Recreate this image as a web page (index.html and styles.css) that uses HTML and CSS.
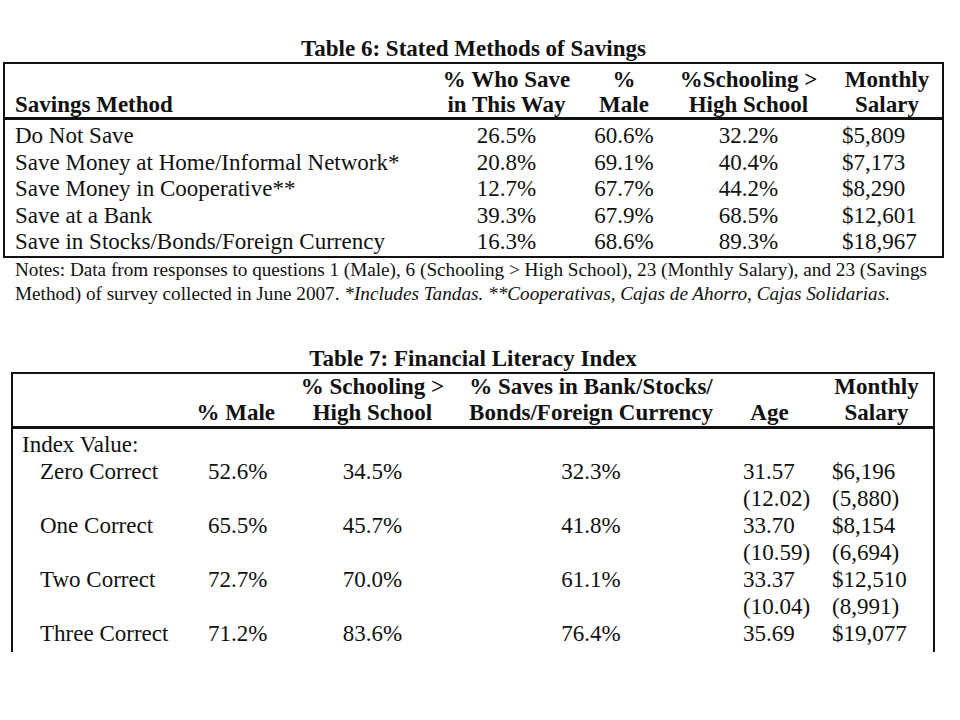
FILE: index.html
```html
<!DOCTYPE html>
<html>
<head>
<meta charset="utf-8">
<link rel="stylesheet" href="styles.css">
</head>
<body>
<main class="page">
  <section class="block6">
    <h2 class="title">Table 6: Stated Methods of Savings</h2>
    <div class="frame6">
      <table class="t6">
        <colgroup>
          <col class="c6a"><col class="c6b"><col class="c6c"><col class="c6d"><col class="c6e">
        </colgroup>
        <thead>
          <tr>
            <th class="lbl">Savings Method</th>
            <th>% Who Save<br>in This Way</th>
            <th>%<br>Male</th>
            <th>%Schooling &gt;<br>High School</th>
            <th>Monthly<br>Salary</th>
          </tr>
        </thead>
        <tbody>
          <tr class="first"><td class="lbl">Do Not Save</td><td>26.5%</td><td>60.6%</td><td>32.2%</td><td class="sal">$5,809</td></tr>
          <tr><td class="lbl">Save Money at Home/Informal Network*</td><td>20.8%</td><td>69.1%</td><td>40.4%</td><td class="sal">$7,173</td></tr>
          <tr><td class="lbl">Save Money in Cooperative**</td><td>12.7%</td><td>67.7%</td><td>44.2%</td><td class="sal">$8,290</td></tr>
          <tr><td class="lbl">Save at a Bank</td><td>39.3%</td><td>67.9%</td><td>68.5%</td><td class="sal">$12,601</td></tr>
          <tr><td class="lbl">Save in Stocks/Bonds/Foreign Currency</td><td>16.3%</td><td>68.6%</td><td>89.3%</td><td class="sal">$18,967</td></tr>
        </tbody>
      </table>
    </div>
    <p class="notes">Notes: Data from responses to questions 1 (Male), 6 (Schooling &gt; High School), 23 (Monthly Salary), and 23 (Savings<br>Method) of survey collected in June 2007. <em>*Includes Tandas. **Cooperativas, Cajas de Ahorro, Cajas Solidarias.</em></p>
  </section>

  <section class="block7">
    <h2 class="title">Table 7: Financial Literacy Index</h2>
    <div class="frame7">
      <table class="t7">
        <colgroup>
          <col class="c7a"><col class="c7b"><col class="c7c"><col class="c7d"><col class="c7e"><col class="c7f">
        </colgroup>
        <thead>
          <tr>
            <th></th>
            <th class="male">% Male</th>
            <th>% Schooling &gt;<br>High School</th>
            <th>% Saves in Bank/Stocks/<br>Bonds/Foreign Currency</th>
            <th>Age</th>
            <th class="salh">Monthly<br>Salary</th>
          </tr>
        </thead>
        <tbody>
          <tr class="first"><td class="idx" colspan="6">Index Value:</td></tr>
          <tr><td class="lvl">Zero Correct</td><td class="pm">52.6%</td><td class="ctr">34.5%</td><td class="ctr">32.3%</td><td class="age">31.57</td><td class="sal7">$6,196</td></tr>
          <tr><td></td><td></td><td></td><td></td><td class="age">(12.02)</td><td class="sal7">(5,880)</td></tr>
          <tr><td class="lvl">One Correct</td><td class="pm">65.5%</td><td class="ctr">45.7%</td><td class="ctr">41.8%</td><td class="age">33.70</td><td class="sal7">$8,154</td></tr>
          <tr><td></td><td></td><td></td><td></td><td class="age">(10.59)</td><td class="sal7">(6,694)</td></tr>
          <tr><td class="lvl">Two Correct</td><td class="pm">72.7%</td><td class="ctr">70.0%</td><td class="ctr">61.1%</td><td class="age">33.37</td><td class="sal7">$12,510</td></tr>
          <tr><td></td><td></td><td></td><td></td><td class="age">(10.04)</td><td class="sal7">(8,991)</td></tr>
          <tr><td class="lvl">Three Correct</td><td class="pm">71.2%</td><td class="ctr">83.6%</td><td class="ctr">76.4%</td><td class="age">35.69</td><td class="sal7">$19,077</td></tr>
        </tbody>
      </table>
    </div>
  </section>
</main>
</body>
</html>
```

FILE: styles.css
```css
html, body {
  margin: 0;
  padding: 0;
  background: #ffffff;
}

body {
  font-family: "Liberation Serif", "Times New Roman", serif;
  color: #111111;
}

.page {
  display: flex;
  flex-direction: column;
  align-items: flex-start;
}

.title {
  font-size: 23px;
  font-weight: bold;
  line-height: 26px;
  text-align: center;
  margin: 0;
}

/* ---------- Table 6 ---------- */
.block6 {
  width: 941px;
  margin-left: 3px;
  margin-top: 36px;
}

.frame6 {
  border: 2px solid #111111;
}

.t6 {
  width: 937px;
  border-collapse: collapse;
  table-layout: fixed;
  font-size: 23px;
}

.c6a { width: 425px; }
.c6b { width: 153px; }
.c6c { width: 82px; }
.c6d { width: 167px; }
.c6e { width: 110px; }

.t6 th {
  font-weight: bold;
  line-height: 25px;
  padding: 3px 0 0;
  text-align: center;
  vertical-align: bottom;
  border-bottom: 3px solid #111111;
  white-space: nowrap;
}

.t6 td {
  line-height: 26.5px;
  padding: 0;
  text-align: center;
  white-space: nowrap;
}

.t6 .first td {
  padding-top: 3px;
}

.t6 .lbl {
  text-align: left;
  padding-left: 10px;
}

.t6 td.sal {
  text-align: left;
  padding-left: 10px;
}

.notes {
  margin: 0;
  padding-left: 12px;
  font-size: 19.2px;
  line-height: 24px;
  white-space: nowrap;
}

/* ---------- Table 7 ---------- */
.block7 {
  width: 924px;
  margin-left: 11px;
  margin-top: 40px;
}

.frame7 {
  box-sizing: border-box;
  height: 280px;
  overflow: hidden;
  border: 2px solid #111111;
  border-bottom: 0;
}

.t7 {
  width: 920px;
  border-collapse: collapse;
  table-layout: fixed;
  font-size: 23px;
}

.c7a { width: 177px; }
.c7b { width: 95px; }
.c7c { width: 175px; }
.c7d { width: 262px; }
.c7e { width: 95px; }
.c7f { width: 116px; }

.t7 th {
  font-weight: bold;
  line-height: 26px;
  padding: 0;
  text-align: center;
  vertical-align: bottom;
  border-bottom: 3px solid #111111;
  white-space: nowrap;
}

.t7 th.male {
  text-align: right;
  padding-right: 10px;
}

.t7 th.salh {
  padding-left: 3px;
}

.t7 td {
  line-height: 27px;
  padding: 0;
  white-space: nowrap;
  text-align: left;
}

.t7 .first td {
  padding-top: 2px;
}

.t7 td.idx { padding-left: 9px; }
.t7 td.lvl { padding-left: 27px; }
.t7 td.pm { padding-left: 18px; }
.t7 td.ctr { text-align: center; }
.t7 td.age { padding-left: 21px; }
.t7 td.sal7 { padding-left: 15px; }
```
